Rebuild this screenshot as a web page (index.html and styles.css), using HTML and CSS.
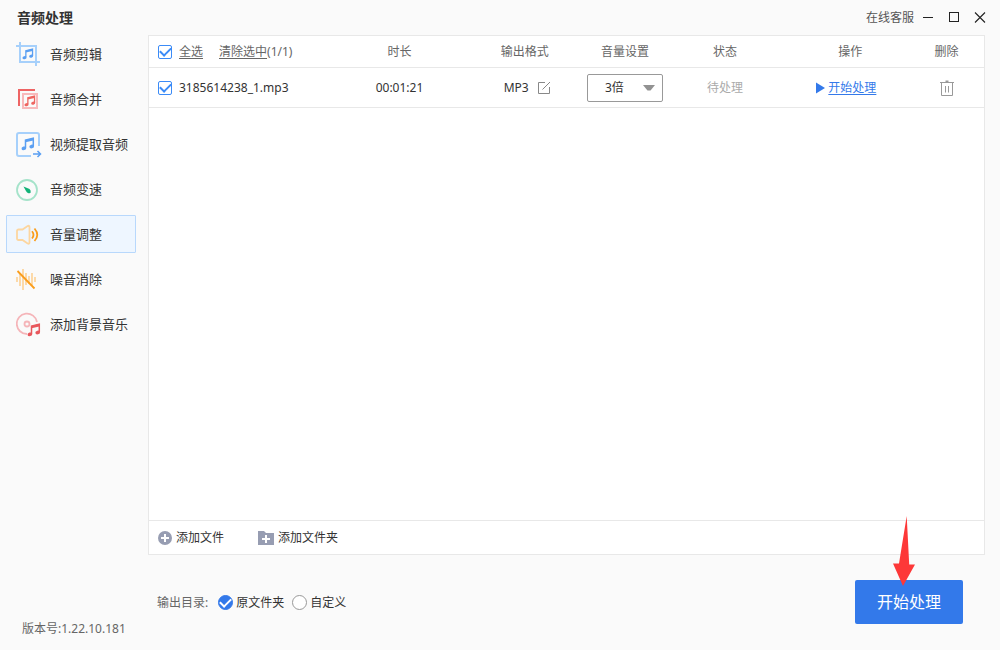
FILE: index.html
```html
<!DOCTYPE html>
<html lang="zh-CN">
<head>
<meta charset="utf-8">
<meta name="viewport" content="width=device-width, initial-scale=1">
<title>音频处理</title>
<link rel="stylesheet" href="styles.css">
</head>
<body>
<svg class="defs" aria-hidden="true">
  <symbol id="note" viewBox="0 0 14 14">
    <path d="M4.5 10.8V3.2L12.3 1.3V9" fill="none" stroke="currentColor" stroke-width="1.5"/>
    <path d="M4.5 3L12.3 1.1V3.4L4.5 5.3Z" fill="currentColor"/>
    <ellipse cx="2.9" cy="11.3" rx="2.4" ry="1.8" fill="currentColor" transform="rotate(-15 2.9 11.3)"/>
    <ellipse cx="10.7" cy="9.5" rx="2.4" ry="1.8" fill="currentColor" transform="rotate(-15 10.7 9.5)"/>
  </symbol>
</svg>
<div class="app">
  <header class="titlebar">
    <h1 class="title">音频处理</h1>
    <div class="window-tools">
      <a class="support" href="#support">在线客服</a>
      <button class="win-btn" type="button" aria-label="最小化"><svg width="12" height="12" viewBox="0 0 12 12"><path d="M1 5.5H11" stroke="#222"/></svg></button>
      <button class="win-btn" type="button" aria-label="最大化"><svg width="12" height="12" viewBox="0 0 12 12"><rect x="1.5" y="0.5" width="9" height="9" fill="none" stroke="#222"/></svg></button>
      <button class="win-btn" type="button" aria-label="关闭"><svg width="12" height="12" viewBox="0 0 12 12"><path d="M1 0.5L11 10.5M11 0.5L1 10.5" stroke="#222" stroke-width="1.1"/></svg></button>
    </div>
  </header>
  <div class="body">
    <aside class="sidebar">
      <nav class="nav">
        <a class="nav-item" href="#cut">
          <svg class="nav-icon" viewBox="0 0 26 26"><path d="M4 0V20H24M0 4H20V24" fill="none" stroke="#a6d0fb" stroke-width="2"/><use href="#note" x="6" y="6" width="12" height="12" color="#5a9ff2"/></svg>音频剪辑</a>
        <a class="nav-item" href="#merge">
          <svg class="nav-icon" viewBox="0 0 26 26"><path d="M3 19V3H19" fill="none" stroke="#ee6464" stroke-width="2"/><rect x="7" y="7" width="14" height="14" fill="none" stroke="#f8b9bb" stroke-width="2"/><use href="#note" x="8" y="8" width="12" height="12" color="#ee6560"/></svg>音频合并</a>
        <a class="nav-item" href="#extract">
          <svg class="nav-icon" viewBox="0 0 26 26"><path d="M15 24H3Q1 24 1 22V3Q1 1 3 1H21Q23 1 23 3V14" fill="none" stroke="#a6d0fb" stroke-width="2"/><use href="#note" x="5" y="5" width="14" height="14" color="#5a9ff2"/><path d="M17 22H24M21.5 19L24.5 22L21.5 25" fill="none" stroke="#5a9ff2" stroke-width="1.5"/></svg>视频提取音频</a>
        <a class="nav-item" href="#speed">
          <svg class="nav-icon" viewBox="0 0 26 26"><circle cx="11" cy="13" r="10" fill="none" stroke="#a5e3ca" stroke-width="1.8"/><path d="M7.5 9.5L13.5 12Q15 13 14.7 15.5Q14 17 11.5 15.8Q10.5 15.2 7.5 9.5Z" fill="#12b278"/></svg>音频变速</a>
        <a class="nav-item active" href="#volume" aria-current="page">
          <svg class="nav-icon" viewBox="0 0 26 26"><path d="M2.5 7.5H6.5L11.3 4.2Q13.5 3 13.5 5V20.5Q13.5 22.5 11.3 21.3L6.5 18H2.5Q1 18 1 16.5V9Q1 7.5 2.5 7.5Z" fill="none" stroke="#fcd6a0" stroke-width="1.8"/><path d="M16 9.3Q19 13 16 16.5" fill="none" stroke="#fa9d1c" stroke-width="1.8"/><path d="M18.5 6.5Q24 13 18.5 19" fill="none" stroke="#fa9d1c" stroke-width="1.8"/></svg>音量调整</a>
        <a class="nav-item" href="#noise">
          <svg class="nav-icon" viewBox="0 0 26 26"><path d="M1 10V15M4 7V19M7 2V23M10 6V18M13 9V17M16 6V18M19 10V15" fill="none" stroke="#fcd6a0" stroke-width="1.8"/><path d="M1.5 4L18.5 21.5" stroke="#fa9d1c" stroke-width="1.8"/></svg>噪音消除</a>
        <a class="nav-item" href="#bgm">
          <svg class="nav-icon" viewBox="0 0 26 26"><path d="M11 22A10.2 10.2 0 1 1 21 10" fill="none" stroke="#f5b5b9" stroke-width="1.8"/><circle cx="11" cy="12" r="2.5" fill="none" stroke="#f5b5b9" stroke-width="1.8"/><use href="#note" x="11" y="11" width="14" height="14" color="#e8575c"/></svg>添加背景音乐</a>
      </nav>
      <p class="version">版本号:1.22.10.181</p>
    </aside>
    <main class="main">
      <section class="panel">
        <table class="files">
          <colgroup><col class="c-name"><col class="c-time"><col class="c-format"><col class="c-volume"><col class="c-status"><col class="c-action"><col class="c-delete"></colgroup>
          <thead>
            <tr>
              <th class="name-cell"><div class="name-row"><input class="check" type="checkbox" id="all" checked><label class="underline" for="all">全选</label><span class="clear"><a class="underline" href="#clear">清除选中</a>(1/1)</span></div></th>
              <th>时长</th><th>输出格式</th><th>音量设置</th><th>状态</th><th>操作</th><th class="delete-cell">删除</th>
            </tr>
          </thead>
          <tbody>
            <tr>
              <td class="name-cell"><div class="name-row"><input class="check" type="checkbox" id="file1" checked><label for="file1">3185614238_1.mp3</label></div></td>
              <td>00:01:21</td>
              <td><div class="format">MP3<button class="icon-btn" type="button" aria-label="修改格式"><svg width="14" height="14" viewBox="0 0 14 14"><path d="M8 1.5H1.5V12.5H12.5V6M5.5 8.5L13 1" fill="none" stroke="#888"/></svg></button></div></td>
              <td><div class="volume"><select class="select" aria-label="音量设置"><option>1倍</option><option>2倍</option><option selected>3倍</option></select><svg class="caret" width="12" height="6" viewBox="0 0 12 6"><path d="M0 0H12L7.5 5.5H4.5Z" fill="#929292"/></svg></div></td>
              <td class="pending">待处理</td>
              <td class="action-cell"><a class="start" href="#start"><svg width="9" height="12" viewBox="0 0 9 12"><path d="M0 0.5L9 6L0 11.5Z" fill="#3379ea"/></svg><span class="underline">开始处理</span></a></td>
              <td class="delete-cell"><button class="icon-btn" type="button" aria-label="删除"><svg width="16" height="16" viewBox="0 0 16 16"><path d="M1 2.5H15M2.5 2.5V15.5H13.5V2.5M6.5 6V12.5M9.5 6V12.5" fill="none" stroke="#999"/><path d="M6.5 0.5H9.5V2H6.5Z" fill="#999"/></svg></button></td>
            </tr>
          </tbody>
        </table>
        <div class="panel-tools">
          <button class="add" type="button"><svg width="14" height="14" viewBox="0 0 14 14"><circle cx="7" cy="7" r="7" fill="#979db2"/><path d="M7 3V11M3 7H11" stroke="#fff" stroke-width="2"/></svg>添加文件</button>
          <button class="add" type="button"><svg width="16" height="14" viewBox="0 0 16 14"><path d="M0 0H6L8 2H16V14H0Z" fill="#979db2"/><path d="M8 4V12M4 8H12" stroke="#fff" stroke-width="2"/></svg>添加文件夹</button>
        </div>
      </section>
      <footer class="bottom">
        <div class="output" role="radiogroup" aria-labelledby="dir">
          <span class="output-label" id="dir">输出目录:</span>
          <label class="choice"><input class="radio" type="radio" name="dir" checked>原文件夹</label>
          <label class="choice"><input class="radio" type="radio" name="dir">自定义</label>
        </div>
        <div class="submit">
          <button class="primary" type="button">开始处理</button>
          <svg class="pointer" width="22" height="70" viewBox="0 0 22 70" aria-hidden="true"><path d="M13.7 0L16.2 48.5H22L10 70L0 47.5H6Z" fill="#fd3838"/></svg>
        </div>
      </footer>
    </main>
  </div>
</div>
</body>
</html>
```
FILE: styles.css
```css
* { box-sizing: border-box; }
body {
  margin: 0;
  background: #fafafa;
  color: #333;
  font: 12px/18px "Noto Sans", "Noto Sans CJK SC", sans-serif;
}
button, select, input { font: inherit; color: inherit; margin: 0; }
button { padding: 0; border: 0; background: none; }
a { color: inherit; text-decoration: none; }
svg { display: block; flex: none; }
.defs { position: absolute; width: 0; height: 0; }
.underline { text-decoration: underline; text-underline-offset: 2px; }

.app { display: flex; flex-direction: column; min-height: 100vh; }
.titlebar {
  display: flex;
  justify-content: space-between;
  align-items: center;
  height: 35px;
  padding: 0 14px 0 17px;
}
.title { margin: 0; font-size: 14px; font-weight: 700; }
.window-tools { display: flex; align-items: center; gap: 14px; color: #555; }
.support { margin-right: -6px; }
.win-btn { width: 12px; height: 12px; }

.body { display: flex; flex: 1; }
.sidebar {
  display: flex;
  flex: 0 0 148px;
  flex-direction: column;
  justify-content: space-between;
}
.nav { display: flex; flex-direction: column; gap: 7px; padding: 0 12px 0 6px; }
.nav-item {
  display: flex;
  align-items: center;
  gap: 8px;
  height: 38px;
  padding-left: 9px;
  border: 1px solid transparent;
  font-size: 13px;
  white-space: nowrap;
}
.nav-item.active { border-color: #b8d8fc; border-radius: 1px; background: #eef6ff; }
.nav-icon { width: 26px; height: 26px; margin-top: 2px; }
.version { margin: 0; padding: 0 0 12px 22px; color: #666; }

.main { display: flex; flex: 1; flex-direction: column; min-width: 0; padding-right: 15px; }
.panel {
  display: flex;
  flex: 1;
  flex-direction: column;
  justify-content: space-between;
  border: 1px solid #e8e8e8;
  background: #fff;
}
.files { width: 100%; table-layout: fixed; border-collapse: separate; border-spacing: 0; text-align: center; }
.c-name { width: 22%; }
.c-time { width: 16%; }
.c-format { width: 14%; }
.c-volume { width: 10%; }
.c-status { width: 14%; }
.c-action { width: 16%; }
.c-delete { width: 8%; }
.files th, .files td { padding: 0; border-bottom: 1px solid #e8e8e8; }
.files th { height: 32px; color: #666; font-weight: 400; }
.files td { height: 40px; }
.files .name-cell { padding-left: 9px; text-align: left; }
.files .delete-cell { padding-right: 8px; }
.files .action-cell { padding-right: 8px; }
.files .pending { color: #aaa; }
.name-row { display: flex; align-items: center; gap: 7px; }
.clear { margin-left: 9px; }
.format, .start { display: flex; align-items: center; justify-content: center; }
.format { gap: 8px; padding-left: 5px; }
.start { gap: 3px; color: #3379ea; }
.icon-btn { display: inline-flex; vertical-align: middle; }

.check, .radio {
  display: grid;
  flex: none;
  place-items: center;
  appearance: none;
  background: #fff;
}
.check { width: 14px; height: 14px; border: 1px solid #3b8bf7; border-radius: 2px; }
.radio { width: 15px; height: 15px; border: 1px solid #999; border-radius: 50%; }
.radio:checked { border-color: #3379ea; background: #3379ea; }
.check:checked::before, .radio:checked::before {
  content: "";
  width: 9px;
  height: 5px;
  margin-bottom: 3px;
  border: solid #3b8bf7;
  border-width: 0 0 2px 2px;
  transform: rotate(-45deg);
}
.radio:checked::before { border-color: #fff; }

.volume { position: relative; display: inline-block; vertical-align: middle; }
.select {
  display: block;
  width: 76px;
  height: 28px;
  padding: 0 24px 0 17px;
  appearance: none;
  border: 1px solid #999;
  border-radius: 2px;
  background: #fff;
}
.caret { position: absolute; top: 11px; right: 8px; pointer-events: none; }

.panel-tools {
  display: flex;
  gap: 34px;
  height: 34px;
  padding-left: 9px;
  border-top: 1px solid #e8e8e8;
}
.add { display: flex; align-items: center; gap: 4px; }

.bottom {
  display: flex;
  align-items: center;
  justify-content: space-between;
  height: 95px;
  padding: 0 22px 0 9px;
}
.output { display: flex; align-items: center; gap: 8px; }
.output-label { margin-right: 2px; color: #666; }
.choice { display: flex; align-items: center; gap: 3px; }
.submit { position: relative; margin-bottom: 2px; }
.primary {
  display: block;
  width: 108px;
  height: 44px;
  border-radius: 2px;
  background: #3379ea;
  color: #fff;
  font-size: 16px;
}
.pointer { position: absolute; top: -64px; left: 38px; pointer-events: none; }
```
